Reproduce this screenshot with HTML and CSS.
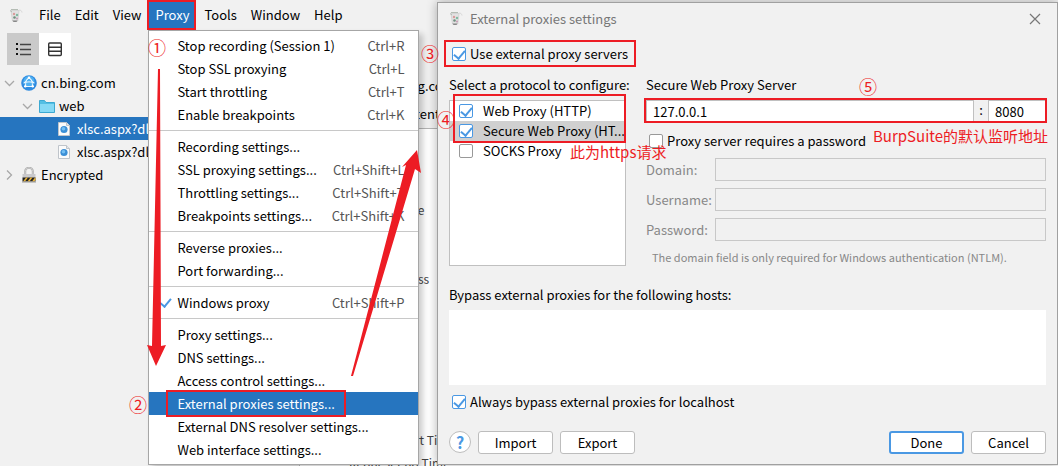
FILE: index.html
```
<!DOCTYPE html>
<html lang="en">
<head>
<meta charset="utf-8">
<title>External proxies settings</title>
<link rel="stylesheet" href="styles.css">
</head>
<body>
<svg class="defs" aria-hidden="true">
  <symbol id="jug" viewBox="0 0 14 16">
    <path d="M2 2.500h8l-1.200 10.500H3.500z" fill="#e2e2e2" stroke="#cfcfcf" stroke-width=".8"/>
    <path d="M9.500 2.500c2-1 3 0 3.500 2" fill="none" stroke="#d8d8d8"/>
    <path d="M1 2.500 3 4M2 1.500h7" stroke="#b4bcb4"/>
    <circle cx="5" cy="6" r="1.200" fill="#d99a9a"/><circle cx="8" cy="7" r="1.200" fill="#7fb9a0"/>
    <circle cx="5.500" cy="9.500" r="1.300" fill="#6f8f7f"/><circle cx="8" cy="10.500" r="1.100" fill="#c9a0b8"/>
    <path d="M3.500 12.500h5l-1 1.500H4.500z" fill="#888"/>
  </symbol>
  <symbol id="down" viewBox="0 0 12 12"><path d="M2 4l4.500 4.500L11 4" fill="none" stroke="#a8a8a8" stroke-width="1.300"/></symbol>
  <symbol id="right" viewBox="0 0 12 12"><path d="M4 1.500 8.500 6 4 10.500" fill="none" stroke="#a8a8a8" stroke-width="1.300"/></symbol>
  <symbol id="file" viewBox="0 0 16 16">
    <path d="M2.500 1.500h8l3 3v10h-11z" fill="#fbfbfb" stroke="#bfc4ca"/>
    <path d="M10.500 1.500v3h3" fill="#e2e5e8" stroke="#bfc4ca"/>
    <circle cx="8" cy="8.500" r="3.600" fill="#3b8fd6"/><circle cx="7.500" cy="7.800" r="1.800" fill="#74c0f3"/>
  </symbol>
</svg>

<div class="app">
  <nav class="menubar">
    <svg class="jug"><use href="#jug"/></svg>
    <button>File</button><button>Edit</button><button>View</button>
    <div class="menu-host">
      <button class="open">Proxy</button>
      <div class="menu">
        <ul>
          <li><button>Stop recording (Session 1)<kbd>Ctrl+R</kbd></button></li>
          <li><button>Stop SSL proxying<kbd>Ctrl+L</kbd></button></li>
          <li><button>Start throttling<kbd>Ctrl+T</kbd></button></li>
          <li><button>Enable breakpoints<kbd>Ctrl+K</kbd></button></li>
        </ul>
        <ul>
          <li><button>Recording settings...</button></li>
          <li><button>SSL proxying settings...<kbd>Ctrl+Shift+L</kbd></button></li>
          <li><button>Throttling settings...<kbd>Ctrl+Shift+T</kbd></button></li>
          <li><button>Breakpoints settings...<kbd>Ctrl+Shift+K</kbd></button></li>
        </ul>
        <ul>
          <li><button>Reverse proxies...</button></li>
          <li><button>Port forwarding...</button></li>
        </ul>
        <ul>
          <li><button class="ticked">Windows proxy<kbd>Ctrl+Shift+P</kbd></button></li>
        </ul>
        <ul>
          <li><button>Proxy settings...</button></li>
          <li><button>DNS settings...</button></li>
          <li><button>Access control settings...</button></li>
          <li><button class="current">External proxies settings...</button></li>
          <li><button>External DNS resolver settings...</button></li>
          <li><button>Web interface settings...</button></li>
        </ul>
      </div>
    </div>
    <button>Tools</button><button>Window</button><button>Help</button>
  </nav>

  <div class="workspace">
    <aside class="sidebar">
      <div class="views">
        <button class="selected" aria-label="Structure"><svg viewBox="0 0 32 32"><g fill="#111"><rect x="9" y="10" width="2" height="2"/><rect x="9" y="15" width="2" height="2"/><rect x="9" y="20" width="2" height="2"/></g><path d="M13 11.500h11M13 16.500h11M13 21.500h11" stroke="#444" stroke-width="1.500"/></svg></button>
        <button aria-label="Sequence"><svg viewBox="0 0 32 32"><rect x="9.700" y="10" width="12.600" height="12.500" rx="1" fill="none" stroke="#333" stroke-width="1.400"/><path d="M10 14.200h12M10 18.300h12" stroke="#333" stroke-width="1.400"/></svg></button>
      </div>
      <ul class="tree">
        <li class="host"><svg class="arrow"><use href="#down"/></svg>
          <svg class="icon" viewBox="0 0 16 16"><circle cx="8" cy="8" r="7.800" fill="#2f8be0"/><circle cx="8" cy="6.500" r="5.500" fill="#4fb0f2"/><path d="M8 2.500C5.500 4 4.500 7 4.500 11M8 2.500c2.500 1.500 3.500 5 3.500 8.500M2.500 8c3-1.500 8-1.500 11 0M3 11.500h10M8 2.500 3 8M8 2.500 13 8" fill="none" stroke="#e9f6ff" stroke-width="1"/><g fill="#fff"><circle cx="8" cy="2.800" r="1.200"/><circle cx="4.300" cy="11.300" r="1.200"/><circle cx="11.700" cy="11.300" r="1.200"/></g></svg>cn.bing.com</li>
        <li class="folder"><svg class="arrow"><use href="#down"/></svg>
          <svg class="icon" viewBox="0 0 16 16"><path d="M.5 2.500h5l1.500 2h8.500v10H.5z" fill="#53bfe4" stroke="#3ca9d2"/><path d="M1 6h14v8H1z" fill="#85d9f5"/></svg>web</li>
        <li class="leaf selected"><svg class="icon"><use href="#file"/></svg>xlsc.aspx?dl=</li>
        <li class="leaf"><svg class="icon"><use href="#file"/></svg>xlsc.aspx?dl=</li>
        <li class="host"><svg class="arrow"><use href="#right"/></svg>
          <svg class="icon" viewBox="0 0 16 16"><path d="M4.200 8V4.500a3.800 3.800 0 0 1 7.600 0V8" fill="none" stroke="#aaa" stroke-width="2"/><path d="M4.200 8V4.500a3.800 3.800 0 0 1 7.600 0V8" fill="none" stroke="#ddd" stroke-width=".7"/><rect x="1.500" y="7" width="13" height="4" fill="#c9c9cc"/><rect x="1.500" y="10.500" width="13" height="4" fill="#222"/><path d="M2 14.500 5 10.500h2l-3 4zM6.500 14.500l3-4h2l-3 4zM11 14.500l3-4h.5V13l-1.200 1.500z" fill="#e9b43a"/><path d="M1 15h14" stroke="#999"/></svg>Encrypted</li>
      </ul>
    </aside>
    <main class="details">
      <div class="tab session">https://cn.bing.com</div>
      <div class="tab contents">Contents</div>
      <ul class="properties">
        <li>Content-Type</li>
        <li>Client Address</li>
        <li class="timing">Request Start Time</li>
        <li>Request End Time</li>
      </ul>
    </main>
  </div>

  <form class="dialog">
    <header class="titlebar">
      <svg class="jug"><use href="#jug"/></svg>
      <h1>External proxies settings</h1>
      <button type="button" class="close" aria-label="Close"><svg viewBox="0 0 12 12"><path d="M1 1l10 10M11 1 1 11" stroke="#777" stroke-width="1.200"/></svg></button>
    </header>
    <label class="check use"><input type="checkbox" checked>Use external proxy servers</label>
    <div class="columns">
      <section class="protocols">
        <h2>Select a protocol to configure:</h2>
        <div class="list">
          <label><input type="checkbox" checked><span>Web Proxy (HTTP)</span></label>
          <label class="active"><input type="checkbox" checked><span>Secure Web Proxy (HT...</span></label>
          <label><input type="checkbox"><span>SOCKS Proxy</span></label>
        </div>
      </section>
      <section class="server">
        <h2>Secure Web Proxy Server</h2>
        <div class="address">
          <input type="text" value="127.0.0.1" aria-label="Host"><span>:</span><input class="port" type="text" value="8080" aria-label="Port">
        </div>
        <label class="check auth"><input type="checkbox">Proxy server requires a password</label>
        <div class="fields">
          <label for="domain">Domain:</label><input id="domain" type="text" disabled>
          <label for="user">Username:</label><input id="user" type="text" disabled>
          <label for="pass">Password:</label><input id="pass" type="password" disabled>
        </div>
        <p class="hint">The domain field is only required for Windows authentication (NTLM).</p>
      </section>
    </div>
    <label class="bypass" for="hosts">Bypass external proxies for the following hosts:</label>
    <textarea id="hosts"></textarea>
    <label class="check local"><input type="checkbox" checked>Always bypass external proxies for localhost</label>
    <footer class="actions">
      <button type="button" class="help" aria-label="Help">?</button>
      <button type="button">Import</button>
      <button type="button">Export</button>
      <button type="button" class="primary">Done</button>
      <button type="button">Cancel</button>
    </footer>
  </form>

  <div class="notes">
    <svg class="arrows" viewBox="0 0 440 466"><path d="M158 69h2l1 277 5-1-10 21-9-21 5 1zM351 376l55-211-4 2 15-17 4 23-6-4-62 207z" fill="#ed1c24"/></svg>
    <i class="frame frame-proxy"></i>
    <i class="frame frame-item"></i>
    <i class="frame frame-use"></i>
    <i class="frame frame-list"></i>
    <i class="frame frame-address"></i>
    <span class="mark mark-1">①</span>
    <span class="mark mark-2">②</span>
    <span class="mark mark-3">③</span>
    <span class="mark mark-4">④</span>
    <span class="mark mark-5">⑤</span>
    <span class="remark remark-https">此为https请求</span>
    <span class="remark remark-burp">BurpSuite的默认监听地址</span>
  </div>
</div>
</body>
</html>
```
FILE: styles.css
```
* { box-sizing: border-box; }
body {
  margin: 0;
  background: #f1f1f1;
  color: #000;
  font: 13px/20px "Noto Sans CJK SC", sans-serif;
}
ul { list-style: none; margin: 0; padding: 0; }
h1, h2, p { margin: 0; font: inherit; }
button, input, textarea, kbd { font: inherit; color: inherit; }
button { margin: 0; padding: 0; border: 0; background: none; white-space: nowrap; }
svg { display: block; flex: none; }
.defs { position: absolute; width: 0; height: 0; }

.app {
  position: relative;
  display: flex;
  flex-direction: column;
  min-height: 100vh;
  overflow: hidden;
}

/* Menu bar */
.menubar { display: flex; height: 30px; align-items: stretch; padding-left: 9px; }
.menubar > button, .menu-host > button { padding: 0 7px; height: 30px; }
.jug { width: 14px; height: 16px; }
.menubar .jug { margin: 8px 9px 0 0; }
.menu-host { position: relative; margin-right: 1px; }
.menu-host > .open { background: #2675bf; color: #fff; }
.menu {
  position: absolute;
  z-index: 2;
  top: 30px;
  left: 0;
  width: 271px;
  padding: 3px 0;
  border: 1px solid #a6a6a6;
  background: #fff;
  box-shadow: 4px 4px 6px rgba(0, 0, 0, .2);
}
.menu ul + ul { margin-top: 4px; padding-top: 4px; border-top: 1px solid #c8c8c8; }
.menu button {
  position: relative;
  display: flex;
  justify-content: space-between;
  align-items: center;
  width: 100%;
  height: 23px;
  padding: 0 14px 0 28px;
}
.menu kbd { color: #555; }
.menu .current { background: #2675bf; color: #fff; }
.ticked::before {
  content: "";
  position: absolute;
  left: 13px;
  top: 5px;
  width: 5px;
  height: 9px;
  border: solid #4a98e3;
  border-width: 0 2px 2px 0;
  transform: rotate(40deg);
}

/* Workspace */
.workspace { display: flex; flex: 1; }
.sidebar { width: 300px; border-right: 1px solid #bbb; }
.views { display: flex; padding: 3px 7px 6px; }
.views button { width: 32px; height: 32px; background: #fff; }
.views .selected { background: #cacaca; }
.tree li { display: flex; align-items: center; height: 23px; padding-left: 3px; }
.tree .folder { padding-left: 21px; }
.tree .leaf { padding-left: 56px; gap: 1px; }
.tree .selected { background: #2675bf; color: #fff; }
.arrow { width: 12px; height: 12px; margin-right: 6px; }
.icon { width: 16px; height: 16px; margin-right: 4px; }
.details { flex: 1; }
.session { padding: 46px 0 0 35px; }
.contents { padding: 8px 0 4px 91px; border-bottom: 1px solid #b5b5b5; }
.properties { height: 100%; background: #fff; padding: 71px 0 0 49px; font-size: 12px; color: #444; }
.properties li { height: 23px; }
.properties li:nth-child(2) { margin-top: 46px; }
.properties .timing { margin-top: 138px; }

/* Settings dialog */
.dialog {
  position: absolute;
  z-index: 3;
  left: 437px;
  right: 0;
  top: 2px;
  display: flex;
  flex-direction: column;
  padding: 0 11px 10px;
  border: 1px solid #a0a0a0;
  background: #f1f1f1;
  box-shadow: 0 0 10px rgba(0, 0, 0, .3);
}
.titlebar { display: flex; align-items: center; height: 32px; color: #777; }
.titlebar h1 { margin-left: 7px; }
.close { margin: 0 5px 0 auto; width: 12px; height: 12px; }
.check { display: flex; align-items: center; gap: 4px; height: 20px; padding-left: 3px; }
.use { margin-top: 9px; }
.columns { display: flex; gap: 20px; margin-top: 11px; }
.protocols { width: 177px; }
.server { flex: 1; }
h2 { height: 25px; white-space: nowrap; }
input[type="checkbox"] {
  appearance: none;
  flex: none;
  display: grid;
  place-items: center;
  width: 14px;
  height: 14px;
  margin: 0;
  border: 1px solid #999;
  border-radius: 2px;
  background: #fff;
}
input[type="checkbox"]:checked { border-color: #4a98e3; }
input[type="checkbox"]:checked::after {
  content: "";
  width: 5px;
  height: 9px;
  margin-bottom: 2px;
  border: solid #4a98e3;
  border-width: 0 2px 2px 0;
  transform: rotate(40deg);
}
.list { height: 166px; border: 1px solid #c0c0c0; background: #fff; }
.list label { display: flex; align-items: center; gap: 10px; height: 20px; padding: 0 0 0 9px; }
.list .active { background: #d0d0d0; }
.list span { white-space: nowrap; }
.address { display: flex; }
.address span { width: 14px; text-align: center; }
input[type="text"], input[type="password"] {
  flex: 1;
  min-width: 0;
  height: 23px;
  padding: 0 6px;
  border: 1px solid #c0c0c0;
  background: #fff;
}
.address .port { flex: none; width: 58px; }
.auth { margin-top: 8px; }
.fields {
  display: grid;
  grid-template-columns: 62px 1fr;
  gap: 7px;
  align-items: center;
  margin-top: 7px;
  color: #888;
}
.fields input:disabled { background: #f1f1f1; border-color: #c8c8c8; }
.hint { margin: 6px 0 0 6px; font-size: 11px; color: #888; }
.bypass { margin-top: 18px; height: 25px; }
textarea { height: 75px; padding: 4px; border: 0; background: #fff; resize: none; }
.local { margin-top: 7px; }
.actions { display: flex; gap: 7px; margin-top: 19px; }
.actions button {
  width: 75px;
  height: 23px;
  border: 1px solid #bdbdbd;
  border-radius: 3px;
  background: #fff;
}
.actions .help { width: 22px; height: 22px; border-radius: 50%; color: #4a98e3; font-size: 16px; font-weight: 600; line-height: 18px; }
.actions .primary { margin-left: auto; border: 2px solid #4a98e3; }

/* Red annotations drawn over the windows */
.notes { position: absolute; z-index: 4; inset: 0; color: #ed1c24; pointer-events: none; }
.arrows { width: 440px; height: 466px; }
.frame { position: absolute; border: 2px solid #ed1c24; }
.frame-proxy { left: 147px; top: 0; width: 49px; height: 30px; }
.frame-item { left: 166px; top: 390px; width: 180px; height: 27px; }
.frame-use { left: 444px; top: 40px; width: 192px; height: 27px; }
.frame-list { left: 453px; top: 94px; width: 173px; height: 49px; }
.frame-address { left: 644px; right: 11px; top: 98px; height: 25px; }
.mark, .remark { position: absolute; white-space: nowrap; }
.mark { width: 20px; text-align: center; font-size: 18px; line-height: 20px; }
.mark-1 { left: 147px; top: 37px; }
.mark-2 { left: 128px; top: 394px; }
.mark-3 { left: 420px; top: 43px; }
.mark-4 { left: 436px; top: 109px; }
.mark-5 { left: 858px; top: 76px; }
.remark { font-size: 15px; line-height: 20px; }
.remark-https { left: 570px; top: 142px; }
.remark-burp { right: 10px; top: 126px; }
```
